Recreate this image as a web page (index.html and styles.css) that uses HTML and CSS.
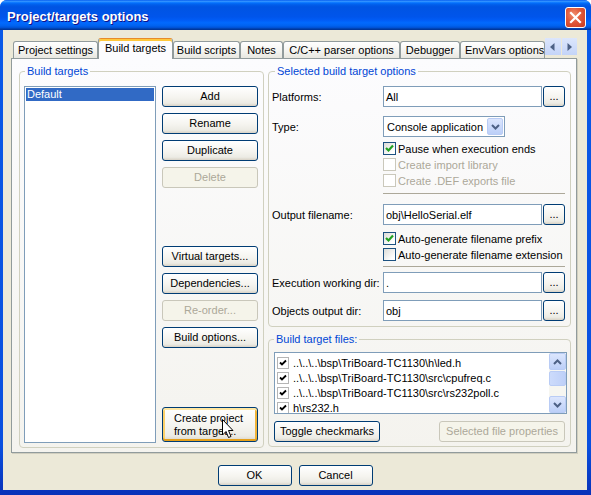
FILE: index.html
```html
<!DOCTYPE html>
<html>
<head>
<meta charset="utf-8">
<title>Project/targets options</title>
<link rel="stylesheet" href="styles.css">
</head>
<body>
<div class="window">
  <div class="titlebar">
    <span class="title">Project/targets options</span>
    <span class="close"><svg width="19" height="19" viewBox="0 0 19 19"><path d="M5 5 L14 14 M14 5 L5 14" stroke="#fff" stroke-width="2.2" stroke-linecap="square"/></svg></span>
  </div>
  <div class="frame">
    <div class="tabs">
      <div class="tab t-proj">Project settings</div>
      <div class="tab tab-active t-build">Build targets</div>
      <div class="tab t-scripts">Build scripts</div>
      <div class="tab t-notes">Notes</div>
      <div class="tab t-parser">C/C++ parser options</div>
      <div class="tab t-debug">Debugger</div>
      <div class="tab t-env">EnvVars options</div>
      <div class="tab-scroll">
        <span class="ts-btn"><svg width="5" height="8" viewBox="0 0 5 8"><path d="M4.5 0 L0 4 L4.5 8Z" fill="#4D6185"/></svg></span>
        <span class="ts-btn"><svg width="5" height="8" viewBox="0 0 5 8"><path d="M0.5 0 L5 4 L0.5 8Z" fill="#4D6185"/></svg></span>
      </div>
    </div>
    <div class="panel">
      <fieldset class="group g-targets">
        <legend>Build targets</legend>
        <div class="targets-body">
          <div class="listbox"><div class="list-item selected">Default</div></div>
          <div class="btn-col">
            <button class="btn">Add</button>
            <button class="btn mt6">Rename</button>
            <button class="btn mt6">Duplicate</button>
            <button class="btn mt6" disabled>Delete</button>
            <button class="btn mt-virtual">Virtual targets...</button>
            <button class="btn mt6">Dependencies...</button>
            <button class="btn mt6" disabled>Re-order...</button>
            <button class="btn mt6">Build options...</button>
            <button class="btn btn-hover btn-tall">Create project<br>from target...<svg class="cursor" width="12" height="20" viewBox="0 0 12 20"><path d="M0.5 0.5 L0.5 16 L4 12.5 L6.5 18.5 L9 17.5 L6.5 11.5 L11 11.5 Z" fill="#fff" stroke="#000" stroke-width="1" stroke-linejoin="miter"/></svg></button>
          </div>
        </div>
      </fieldset>
      <div class="right-col">
        <fieldset class="group g-opts">
          <legend>Selected build target options</legend>
          <div class="row">
            <span class="lbl">Platforms:</span>
            <span class="field">All</span>
            <button class="btn btn-dots">...</button>
          </div>
          <div class="row r-type">
            <span class="lbl">Type:</span>
            <span class="select">Console application<span class="dd"><svg width="9" height="6" viewBox="0 0 9 6"><path d="M1 1 L4.5 4.5 L8 1" stroke="#4D6185" stroke-width="2" fill="none"/></svg></span></span>
          </div>
          <div class="cbrow cb-first"><span class="cb"><svg width="11" height="11" viewBox="0 0 11 11"><path d="M2 5 L4.5 7.5 L9 2.5" stroke="#21A121" stroke-width="2.2" fill="none"/></svg></span>Pause when execution ends</div>
          <div class="cbrow cb-next disabled"><span class="cb cb-disabled"></span>Create import library</div>
          <div class="cbrow cb-next disabled"><span class="cb cb-disabled"></span>Create .DEF exports file</div>
          <div class="sep sep1"></div>
          <div class="row r-output">
            <span class="lbl">Output filename:</span>
            <span class="field">obj\HelloSerial.elf</span>
            <button class="btn btn-dots">...</button>
          </div>
          <div class="cbrow cb-after-output"><span class="cb"><svg width="11" height="11" viewBox="0 0 11 11"><path d="M2 5 L4.5 7.5 L9 2.5" stroke="#21A121" stroke-width="2.2" fill="none"/></svg></span>Auto-generate filename prefix</div>
          <div class="cbrow cb-next"><span class="cb"></span>Auto-generate filename extension</div>
          <div class="sep sep2"></div>
          <div class="row r-exec">
            <span class="lbl">Execution working dir:</span>
            <span class="field">.</span>
            <button class="btn btn-dots">...</button>
          </div>
          <div class="row r-obj">
            <span class="lbl">Objects output dir:</span>
            <span class="field">obj</span>
            <button class="btn btn-dots">...</button>
          </div>
        </fieldset>
        <fieldset class="group g-files">
          <legend>Build target files:</legend>
          <div class="flist">
            <div class="flist-items">
              <div class="frow"><span class="lcb"><svg width="12" height="12" viewBox="0 0 12 12"><rect x="0.5" y="0.5" width="11" height="11" fill="#fff" stroke="#B5B5B5"/><path d="M3 5.5 L5 7.5 L9 3.5" stroke="#000" stroke-width="1.8" fill="none"/></svg></span>..\..\..\bsp\TriBoard-TC1130\h\led.h</div>
              <div class="frow"><span class="lcb"><svg width="12" height="12" viewBox="0 0 12 12"><rect x="0.5" y="0.5" width="11" height="11" fill="#fff" stroke="#B5B5B5"/><path d="M3 5.5 L5 7.5 L9 3.5" stroke="#000" stroke-width="1.8" fill="none"/></svg></span>..\..\..\bsp\TriBoard-TC1130\src\cpufreq.c</div>
              <div class="frow"><span class="lcb"><svg width="12" height="12" viewBox="0 0 12 12"><rect x="0.5" y="0.5" width="11" height="11" fill="#fff" stroke="#B5B5B5"/><path d="M3 5.5 L5 7.5 L9 3.5" stroke="#000" stroke-width="1.8" fill="none"/></svg></span>..\..\..\bsp\TriBoard-TC1130\src\rs232poll.c</div>
              <div class="frow"><span class="lcb"><svg width="12" height="12" viewBox="0 0 12 12"><rect x="0.5" y="0.5" width="11" height="11" fill="#fff" stroke="#B5B5B5"/><path d="M3 5.5 L5 7.5 L9 3.5" stroke="#000" stroke-width="1.8" fill="none"/></svg></span>h\rs232.h</div>
            </div>
            <div class="vscroll">
              <span class="sb-btn"><svg width="9" height="6" viewBox="0 0 9 6"><path d="M1 5 L4.5 1.5 L8 5" stroke="#4D6185" stroke-width="2" fill="none"/></svg></span>
              <span class="sb-thumb"></span>
              <span class="sb-space"></span>
              <span class="sb-btn"><svg width="9" height="6" viewBox="0 0 9 6"><path d="M1 1 L4.5 4.5 L8 1" stroke="#4D6185" stroke-width="2" fill="none"/></svg></span>
            </div>
          </div>
          <div class="files-buttons">
            <button class="btn btn-toggle">Toggle checkmarks</button>
            <button class="btn btn-props" disabled>Selected file properties</button>
          </div>
        </fieldset>
      </div>
    </div>
    <div class="footer">
      <button class="btn btn-foot">OK</button>
      <button class="btn btn-foot">Cancel</button>
    </div>
  </div>
</div>
</body>
</html>
```

FILE: styles.css
```css
* { box-sizing: border-box; }

html, body {
  margin: 0;
  padding: 0;
}

body {
  width: 591px;
  height: 495px;
  overflow: hidden;
  background: #ffffff;
  font-family: "Liberation Sans", Arial, sans-serif;
  font-size: 11px;
  color: #000;
}

.window {
  width: 591px;
  height: 495px;
  display: flex;
  flex-direction: column;
  border-radius: 7px 7px 0 0;
  background: linear-gradient(to bottom, #0A5AE8 0%, #0A50DF 90%, #0831B8 100%);
  overflow: hidden;
}

.titlebar {
  height: 30px;
  flex: none;
  display: flex;
  align-items: flex-start;
  background: linear-gradient(180deg, #0058EE 0%, #3593FF 4%, #288EFF 6%, #127DFF 8%, #036FFC 10%, #0262EE 14%, #0057E5 20%, #0054E3 24%, #0055EB 56%, #005BF5 66%, #026AFE 76%, #0062EF 86%, #0052D6 92%, #0040AB 96%, #003092 100%);
}

.title {
  margin: 9px 0 0 7px;
  font-weight: bold;
  font-size: 13px;
  line-height: 16px;
  color: #fff;
  text-shadow: 1px 1px 0 #0F1089;
}

.close {
  margin: 7px 5px 0 auto;
  width: 21px;
  height: 21px;
  border: 1px solid #fff;
  border-radius: 3px;
  background: radial-gradient(circle at 40% 35%, #F0906F 0%, #E0583A 45%, #C93B1F 100%);
  display: flex;
  align-items: center;
  justify-content: center;
}

.frame {
  flex: 1;
  margin: 0 4px 5px 3px;
  background: #ECE9D8;
  padding-top: 8px;
  display: flex;
  flex-direction: column;
}

/* ---- tabs ---- */
.tabs {
  height: 20px;
  margin-left: 10px;
  display: flex;
  align-items: flex-end;
}

.tab {
  height: 17px;
  border: 1px solid #919B9C;
  border-bottom: none;
  border-radius: 3px 3px 0 0;
  background: linear-gradient(#FFFFFF, #F3F3EF 60%, #E8E7E0);
  text-align: center;
  line-height: 16px;
  white-space: nowrap;
  overflow: hidden;
}

.tab-active {
  position: relative;
  z-index: 1;
  height: 21px;
  margin-bottom: -1px;
  background: #FCFCFE;
  border-top: 1px solid #E68B2C;
  box-shadow: inset 0 2px 0 #FFC83C;
  line-height: 17px;
  padding-top: 1px;
}

.t-proj { width: 85px; }
.t-build { width: 75px; }
.t-scripts { width: 67px; }
.t-notes { width: 43px; }
.t-parser { width: 117px; }
.t-debug { width: 60px; }
.t-env { width: 85px; text-align: left; padding-left: 4px; }

.tab-scroll {
  width: 33px;
  height: 17px;
  margin-bottom: 3px;
  display: flex;
}

.ts-btn {
  width: 16px;
  height: 17px;
  margin-right: 1px;
  background: linear-gradient(#DCE6FC, #C4D4F8);
  display: flex;
  align-items: center;
  justify-content: center;
}

/* ---- panel ---- */
.panel {
  width: 566px;
  height: 395px;
  margin-left: 8px;
  border: 1px solid #919B9C;
  box-shadow: 1px 1px 0 #D0CEBF;
  background: linear-gradient(#FCFCFE, #F4F3EE);
  padding: 6px 5px 0 7px;
  display: flex;
  align-items: flex-start;
  gap: 4px;
}

.group {
  margin: 0;
  min-width: 0;
  border: 1px solid #D0D0BF;
  border-radius: 4px;
}

.group legend {
  padding: 0 2px;
  height: 13px;
  line-height: 13px;
  color: #0046D5;
}

.g-targets {
  width: 245px;
  padding: 8px 5px 4px 4px;
}
.g-targets legend { margin-left: 1px; }

.targets-body {
  display: flex;
}

.listbox {
  width: 132px;
  height: 357px;
  border: 1px solid #7F9DB9;
  background: #fff;
  padding: 1px;
}

.list-item {
  height: 13px;
  line-height: 13px;
  padding-left: 1px;
}

.list-item.selected {
  background: #316AC5;
  color: #fff;
}

.btn-col {
  width: 96px;
  margin-left: 6px;
  display: flex;
  flex-direction: column;
}

/* ---- buttons ---- */
.btn {
  height: 21px;
  padding: 0;
  margin: 0;
  border: 1px solid #003C74;
  border-radius: 3px;
  background: linear-gradient(#FFFFFF 0%, #F5F4EF 55%, #ECEBE4 85%, #D8D2C6 100%);
  font-family: "Liberation Sans", Arial, sans-serif;
  font-size: 11px;
  color: #000;
  line-height: 13px;
  white-space: nowrap;
}

.btn:disabled {
  border-color: #C9C7BA;
  background: #F5F4EA;
  color: #ACA899;
}

.mt6 { margin-top: 6px; }
.mt-virtual { margin-top: 58px; }

.btn-tall {
  position: relative;
  height: 35px;
  margin-top: 59px;
  text-align: left;
  padding-left: 11px;
  line-height: 13px;
}

.btn-hover {
  box-shadow: inset 0 2px 0 #FFE7A2, inset 0 -2px 0 #E5A01A, inset 2px 0 0 #FBD06A, inset -2px 0 0 #F0B43A;
}

.cursor {
  position: absolute;
  left: 59px;
  top: 11px;
}

/* ---- right column ---- */
.right-col {
  width: 303px;
  display: flex;
  flex-direction: column;
}

.g-opts {
  width: 303px;
  padding: 8px 4px 5px 3px;
}
.g-opts legend { margin-left: 3px; }

.row {
  display: flex;
  align-items: center;
  height: 21px;
}

.lbl {
  width: 111px;
  flex: none;
  white-space: nowrap;
}

.field {
  width: 159px;
  height: 21px;
  border: 1px solid #7F9DB9;
  background: #fff;
  padding-left: 2px;
  display: flex;
  align-items: center;
}

.btn-dots {
  width: 22px;
  margin-left: 1px;
  letter-spacing: 0;
}

.r-type { margin-top: 9px; }

.select {
  width: 122px;
  height: 21px;
  border: 1px solid #7F9DB9;
  background: #fff;
  padding-left: 3px;
  display: flex;
  align-items: center;
}

.dd {
  margin-left: auto;
  margin-right: 1px;
  width: 16px;
  height: 17px;
  border: 1px solid #B9CCF5;
  border-radius: 2px;
  background: linear-gradient(#DCE6FD, #BCCFF8);
  display: flex;
  align-items: center;
  justify-content: center;
}

.cbrow {
  display: flex;
  align-items: center;
  gap: 2px;
  height: 13px;
  margin-left: 111px;
  white-space: nowrap;
}

.cb-first { margin-top: 5px; }
.cb-next { margin-top: 3px; }
.cb-after-output { margin-top: 7px; }

.cbrow.disabled { color: #ACA899; }

.cb {
  width: 13px;
  height: 13px;
  flex: none;
  border: 1px solid #1C5180;
  background: linear-gradient(135deg, #DCDCD7, #FFFFFF 80%);
  display: flex;
  align-items: center;
  justify-content: center;
}

.cb.cb-disabled {
  border-color: #CAC8BB;
  background: #fff;
}

.sep {
  margin-left: 111px;
  width: 182px;
  height: 1px;
  background: #ACA899;
}
.sep1 { margin-top: 6px; }
.sep2 { margin-top: 5px; }

.r-output { margin-top: 10px; }
.r-exec { margin-top: 5px; }
.r-obj { margin-top: 7px; }

/* ---- files ---- */
.g-files {
  width: 303px;
  margin-top: 6px;
  padding: 6px 3px 4px 5px;
}

.flist {
  width: 293px;
  height: 62px;
  border: 1px solid #7F9DB9;
  background: #fff;
  display: flex;
  overflow: hidden;
}

.flist-items {
  flex: 1;
  padding: 2px 0 0 2px;
  overflow: hidden;
}

.frow {
  height: 15px;
  display: flex;
  align-items: center;
  gap: 4px;
  white-space: nowrap;
}

.lcb {
  width: 12px;
  height: 12px;
  display: flex;
}

.vscroll {
  width: 17px;
  flex: none;
  background: #F6F6F1;
  display: flex;
  flex-direction: column;
}

.sb-btn {
  width: 17px;
  height: 17px;
  border: 1px solid #B9CCF5;
  border-radius: 2px;
  background: linear-gradient(#DCE6FD, #BCCFF8);
  display: flex;
  align-items: center;
  justify-content: center;
}

.sb-thumb {
  width: 17px;
  height: 15px;
  margin-top: 1px;
  border: 1px solid #B9CCF5;
  border-radius: 2px;
  background: linear-gradient(to right, #CCDBFB, #BED0F8);
}

.sb-space { flex: 1; }

.files-buttons {
  margin-top: 7px;
  display: flex;
}

.btn-toggle { width: 106px; }

.btn-props {
  width: 126px;
  margin-left: auto;
  margin-right: 2px;
}

/* ---- footer ---- */
.footer {
  padding-top: 12px;
  display: flex;
  justify-content: center;
  gap: 7px;
}

.btn-foot {
  width: 74px;
}
```
